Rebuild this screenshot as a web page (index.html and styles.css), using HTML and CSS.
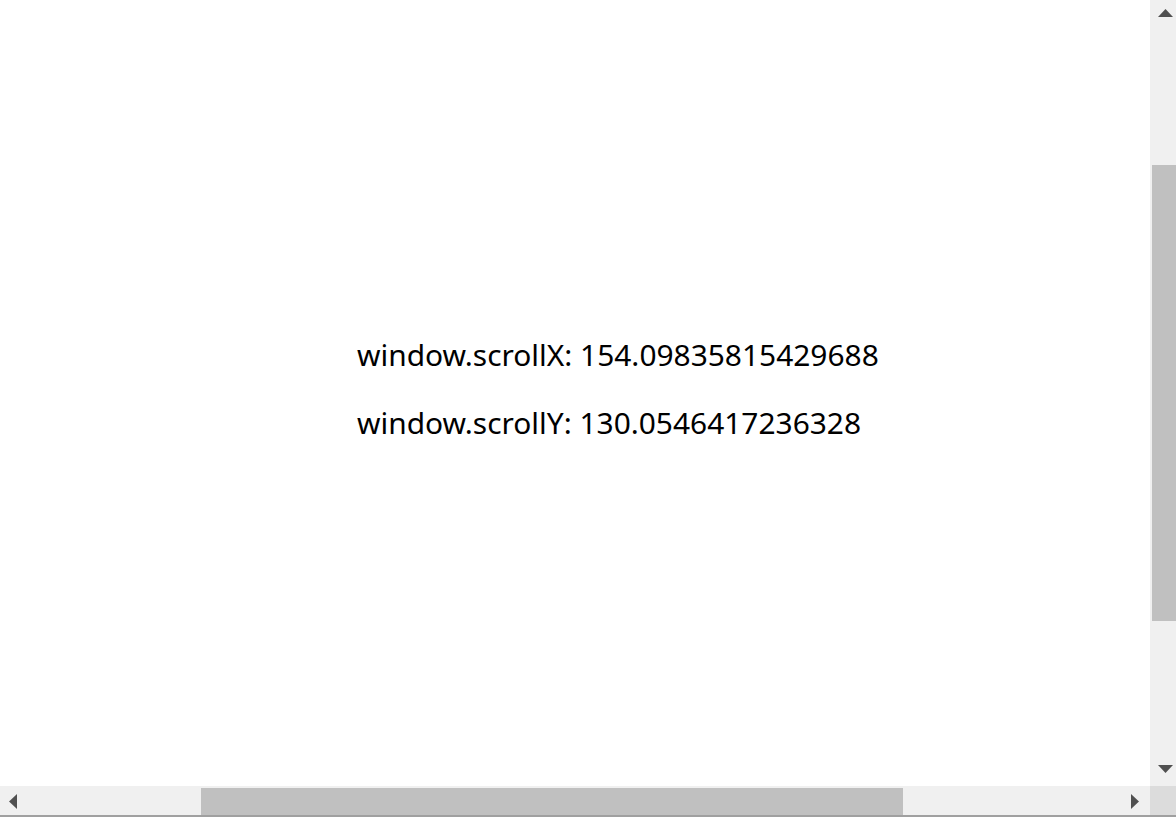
FILE: index.html
```html
<!DOCTYPE html>
<html>
<head>
<meta charset="utf-8">
<link rel="stylesheet" href="styles.css">
</head>
<body>
<div class="window">
  <div class="main-row">
    <div class="content">
      <p class="line">window.scrollX: 154.09835815429688</p>
      <p class="line">window.scrollY: 130.0546417236328</p>
    </div>
    <div class="vscroll">
      <div class="vbtn vbtn-up">
        <svg width="15" height="8" viewBox="0 0 15 8"><polygon points="0,8 7.5,0 15,8" fill="#505050"/></svg>
      </div>
      <div class="vtrack"><div class="vthumb"></div></div>
      <div class="vbtn vbtn-down">
        <svg width="15" height="8" viewBox="0 0 15 8"><polygon points="0,0 15,0 7.5,8" fill="#505050"/></svg>
      </div>
    </div>
  </div>
  <div class="bottom-row">
    <div class="hscroll">
      <div class="hbtn hbtn-left">
        <svg width="8" height="15" viewBox="0 0 8 15"><polygon points="8,0 8,15 0,7.5" fill="#505050"/></svg>
      </div>
      <div class="htrack"><div class="hthumb"></div></div>
      <div class="hbtn hbtn-right">
        <svg width="8" height="15" viewBox="0 0 8 15"><polygon points="0,0 8,7.5 0,15" fill="#505050"/></svg>
      </div>
    </div>
    <div class="corner"></div>
  </div>
  <div class="frame-line"></div>
</div>
</body>
</html>
```
FILE: styles.css
```css
html, body {
  margin: 0;
  padding: 0;
  overflow: hidden;
  background: #ffffff;
}
.window {
  width: 1176px;
  height: 817px;
  display: flex;
  flex-direction: column;
}
.main-row {
  height: 786px;
  display: flex;
}
.content {
  flex: 1;
  padding: 335px 0 0 357px;
  display: flex;
  flex-direction: column;
  gap: 28px;
  font-family: "Noto Sans", "Open Sans", sans-serif;
  font-size: 29.9px;
  color: #000000;
}
.line {
  margin: 0;
  line-height: 40px;
  white-space: nowrap;
}
.vscroll {
  width: 26px;
  background: #f0f0f0;
  display: flex;
  flex-direction: column;
}
.vbtn {
  display: flex;
  justify-content: flex-start;
  padding-left: 8px;
}
.vbtn svg { display: block; }
.vbtn-up {
  height: 26px;
  box-sizing: border-box;
  padding-top: 9px;
}
.vbtn-down {
  height: 33px;
  box-sizing: border-box;
  padding-top: 12px;
}
.vtrack {
  flex: 1;
  padding-top: 139px;
  padding-left: 2px;
}
.vthumb {
  height: 456px;
  background: #c0c0c0;
}
.bottom-row {
  height: 29px;
  display: flex;
}
.hscroll {
  flex: 1;
  background: #f0f0f0;
  display: flex;
}
.hbtn {
  display: flex;
  align-items: flex-start;
  padding-top: 8px;
  box-sizing: border-box;
}
.hbtn svg { display: block; }
.hbtn-left {
  width: 26px;
  padding-left: 9px;
}
.hbtn-right {
  width: 28px;
  padding-left: 9px;
}
.htrack {
  flex: 1;
  padding: 2px 0 0 175px;
  display: flex;
}
.hthumb {
  width: 702px;
  background: #c0c0c0;
}
.corner {
  width: 26px;
  background: #dcdcdc;
}
.frame-line {
  height: 2px;
  background: #a0a0a0;
}
```
